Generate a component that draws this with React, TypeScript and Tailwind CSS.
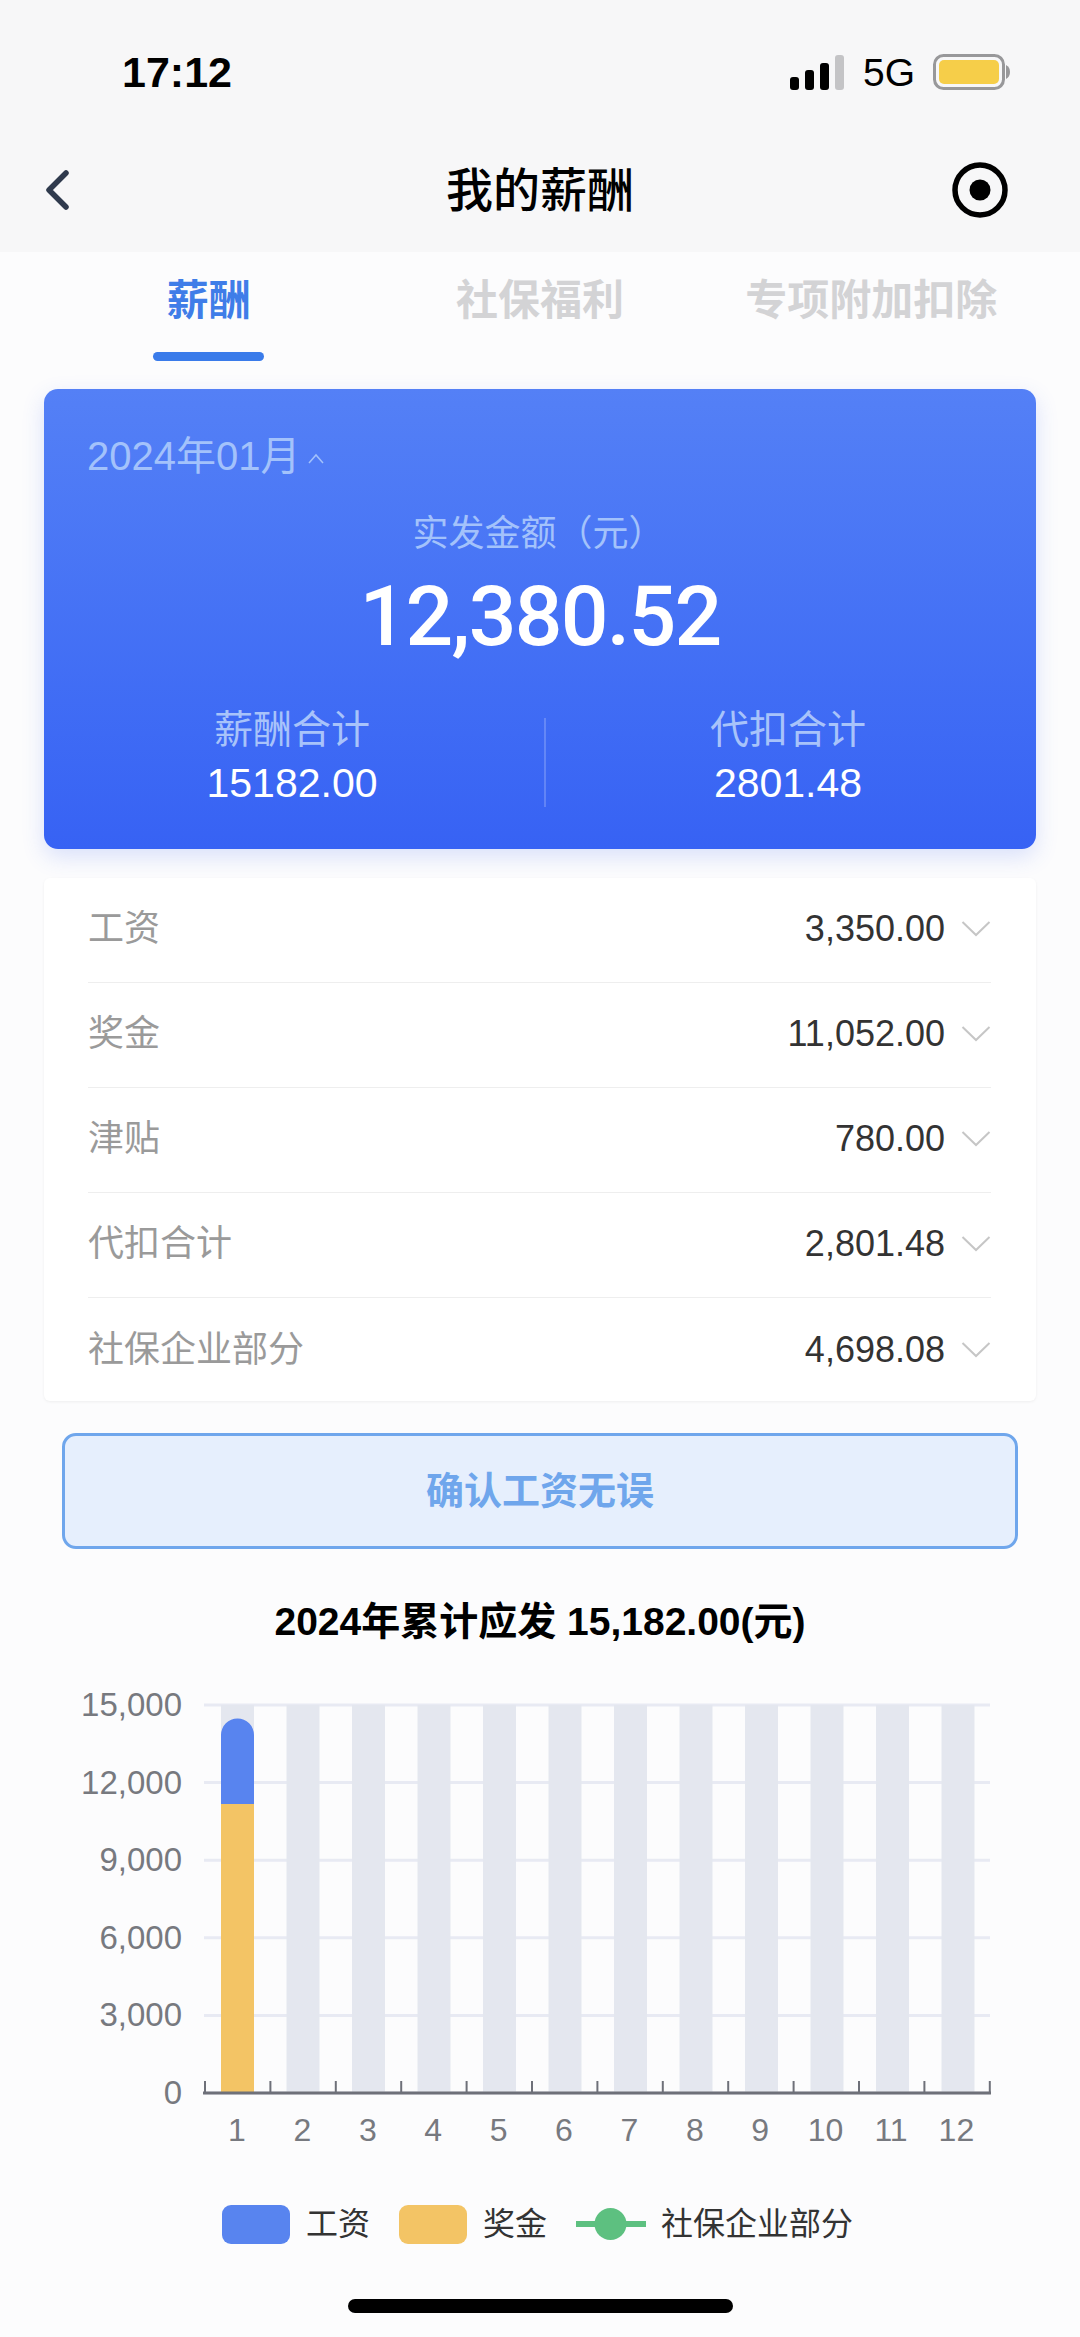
// src/pages/salary.tsx
const rows = [
  { label: '工资', value: '3,350.00' },
  { label: '奖金', value: '11,052.00' },
  { label: '津贴', value: '780.00' },
  { label: '代扣合计', value: '2,801.48' },
  { label: '社保企业部分', value: '4,698.08' },
];

const yLabels = ['15,000', '12,000', '9,000', '6,000', '3,000', '0'];
const months = [1, 2, 3, 4, 5, 6, 7, 8, 9, 10, 11, 12];

function StatusBar() {
  return (
    <div className="flex h-[143px] items-center justify-between pt-[1px] pl-[122px] pr-[69px]">
      <span className="text-[43px] leading-none font-semibold text-black">17:12</span>
      <div className="flex items-center">
        <svg width="54" height="36" viewBox="0 0 54 36" className="mt-[1px]">
          <rect x="0" y="22" width="9" height="13" rx="3" fill="#000" />
          <rect x="15" y="15" width="9" height="20" rx="3" fill="#000" />
          <rect x="30" y="8" width="9" height="27" rx="3" fill="#000" />
          <rect x="45" y="0" width="9" height="35" rx="3" fill="#c4c4c6" />
        </svg>
        <span className="ml-[19px] text-[39px] leading-none text-black">5G</span>
        <svg width="78" height="36" viewBox="0 0 78 36" className="ml-[18px]">
          <rect x="1.5" y="1.5" width="69" height="33" rx="9" fill="none" stroke="#98989a" strokeWidth="3" />
          <rect x="6" y="6" width="60" height="24" rx="5" fill="#f6ce49" />
          <path d="M73 11 q4 2 4 7 q0 5 -4 7z" fill="#98989a" />
        </svg>
      </div>
    </div>
  );
}

function NavBar() {
  return (
    <div className="grid h-[109px] grid-cols-[1fr_auto_1fr] items-center px-[44px] pb-[15px]">
      <svg width="26" height="42" viewBox="0 0 26 42">
        <path d="M22 4 L5 21 L22 38" fill="none" stroke="#2f3a4d" strokeWidth="5.5" strokeLinecap="round" strokeLinejoin="round" />
      </svg>
      <h1 className="text-[47px] leading-none font-medium text-black">我的薪酬</h1>
      <svg width="56" height="56" viewBox="0 0 56 56" className="mr-[28px] justify-self-end">
        <circle cx="28" cy="28" r="25" fill="none" stroke="#000" strokeWidth="5.5" />
        <circle cx="28" cy="28" r="10.5" fill="#000" />
      </svg>
    </div>
  );
}

function Tabs() {
  return (
    <div className="grid h-[120px] grid-cols-3 px-[43px] pt-[21px] text-center text-[42px] leading-[56px] font-bold text-[#d3d3d5]">
      <div className="flex flex-col items-center">
        <span className="text-[#3f7de8]">薪酬</span>
        <div className="mt-[23px] h-[9px] w-[111px] rounded-full bg-[#3a7bea]" />
      </div>
      <div>社保福利</div>
      <div className="whitespace-nowrap">专项附加扣除</div>
    </div>
  );
}

function SummaryCard() {
  return (
    <div className="mx-[44px] mt-[17px] h-[460px] rounded-[14px] bg-gradient-to-b from-[#5480f6] to-[#3762f4] px-[43px] pt-[45px] shadow-[0_8px_22px_rgba(60,100,240,0.18)]">
      <div className="flex items-center text-[40px] leading-[44px] text-[#a3c2fb]">
        <span>2024年01月</span>
        <svg width="16" height="12" viewBox="0 0 16 12" className="mt-[6px] ml-[8px]">
          <path d="M1 10 L8 2 L15 10" fill="none" stroke="#a3c2fb" strokeWidth="1.5" />
        </svg>
      </div>
      <div className="mt-[30px] -ml-[3px] text-center text-[36px] leading-[52px] text-[#a3c2fb]">实发金额（元）</div>
      <div className="mt-[7px] text-center font-['Roboto'] text-[84px] leading-[100px] font-medium tracking-[-1.7px] text-white">12,380.52</div>
      <div className="-mx-[43px] mt-[38px] flex items-center">
        <div className="w-[500px] pr-[4px] text-center">
          <div className="text-[39px] leading-[50px] text-[#a8c3fa]">薪酬合计</div>
          <div className="mt-[3px] text-[41px] leading-[50px] text-white">15182.00</div>
        </div>
        <div className="mt-[12px] h-[89px] w-[2px] bg-white/20" />
        <div className="flex-1 pr-[6px] text-center">
          <div className="text-[39px] leading-[50px] text-[#a8c3fa]">代扣合计</div>
          <div className="mt-[3px] text-[41px] leading-[50px] text-white">2801.48</div>
        </div>
      </div>
    </div>
  );
}

function DetailList() {
  return (
    <div className="mx-[44px] mt-[29px] rounded-[6px] bg-white pl-[44px] pr-[45px] shadow-[0_1px_3px_rgba(0,0,0,0.06)]">
      {rows.map((row, i) => (
        <div
          key={row.label}
          className={`flex items-center justify-between ${
            i < rows.length - 1 ? 'h-[105px] border-b border-[#eeeeee] pb-[3px]' : 'h-[103px]'
          }`}
        >
          <span className="text-[36px] text-[#9a9a9a]">{row.label}</span>
          <div className="flex items-center">
            <span className="text-[36px] text-[#333333]">{row.value}</span>
            <svg width="30" height="18" viewBox="0 0 30 18" className="ml-[16px]">
              <path d="M1.5 2 L15 15 L28.5 2" fill="none" stroke="#c6c6c6" strokeWidth="2" />
            </svg>
          </div>
        </div>
      ))}
    </div>
  );
}

function Chart() {
  return (
    <svg width="1080" height="480" viewBox="0 1680 1080 480" className="block">
      {[0, 1, 2, 3, 4, 5].map((i) => (
        <line key={i} x1="204" x2="990" y1={1705 + i * 77.6} y2={1705 + i * 77.6} stroke="#e8eaf3" strokeWidth="3" />
      ))}
      {months.map((m) => (
        <rect key={m} x={221 + (m - 1) * 65.5} y="1705" width="33" height="388" fill="#e4e7ef" />
      ))}
      <rect x="221" y="1804" width="33" height="289" fill="#f3c465" />
      <path d="M221 1804 V1735 a16.5 16.5 0 0 1 33 0 V1804z" fill="#5884ef" />
      <line x1="203" x2="991" y1="2093" y2="2093" stroke="#6e7079" strokeWidth="3" />
      {Array.from({ length: 13 }).map((_, i) => (
        <line key={i} x1={205 + i * 65.4} x2={205 + i * 65.4} y1="2081" y2="2093" stroke="#6e7079" strokeWidth="2" />
      ))}
      {yLabels.map((label, i) => (
        <text key={label} x="182" y={1716 + i * 77.6} textAnchor="end" fontSize="33" fill="#77797f">
          {label}
        </text>
      ))}
      {months.map((m) => (
        <text key={m} x={237 + (m - 1) * 65.4} y="2141" textAnchor="middle" fontSize="32" fill="#77797f">
          {m}
        </text>
      ))}
    </svg>
  );
}

function Legend() {
  return (
    <div className="mt-[44px] flex h-[40px] items-center pl-[222px] text-[32px] leading-none text-[#333333]">
      <div className="h-[39px] w-[68px] rounded-[9px] bg-[#5884ef]" />
      <span className="ml-[16px]">工资</span>
      <div className="ml-[29px] h-[39px] w-[68px] rounded-[9px] bg-[#f3c465]" />
      <span className="ml-[16px]">奖金</span>
      <svg width="70" height="32" viewBox="0 0 70 32" className="ml-[29px]">
        <rect x="0" y="13" width="70" height="6" fill="#5dc080" />
        <ellipse cx="34.5" cy="16" rx="16" ry="16" fill="#5dc080" />
      </svg>
      <span className="ml-[15px]">社保企业部分</span>
    </div>
  );
}

export default function App() {
  return (
    <div className="flex h-[2337px] w-[1080px] flex-col overflow-hidden bg-[#fcfcfd] [font-family:'Liberation_Sans','Noto_Sans_CJK_SC',sans-serif]">
      <header className="h-[252px] shrink-0 bg-[#f7f7f8]">
        <StatusBar />
        <NavBar />
      </header>
      <Tabs />
      <SummaryCard />
      <DetailList />
      <button className="mx-[62px] mt-[32px] h-[116px] shrink-0 rounded-[14px] border-[3px] border-[#6fa6ec] bg-[#e6effd] text-[38px] font-bold text-[#6fa6ec]">
        确认工资无误
      </button>
      <div className="mt-[50px] text-center text-[39px] leading-[46px] font-semibold text-black">
        2024年累计应发 15,182.00(元)
      </div>
      <div className="mt-[35px]">
        <Chart />
      </div>
      <Legend />
      <div className="mx-auto mt-[55px] h-[14px] w-[385px] rounded-full bg-black" />
    </div>
  );
}
